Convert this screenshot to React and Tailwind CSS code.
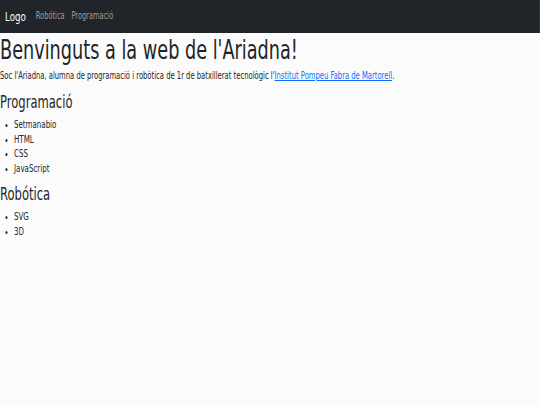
import React from 'react';

const programacio = ['Setmanabio', 'HTML', 'CSS', 'JavaScript'];
const robotica = ['SVG', '3D'];

// The capture is horizontally squeezed, so the page is laid out wider and scaled on x.
function Section({ title, items }) {
  return (
    <section>
      <h2 className="text-[17px] leading-[20px] mb-[5px] text-[#212529]">{title}</h2>
      <ul className="list-disc pl-[20.6px] mb-[9px] text-[10.4px] leading-[14.6px] text-[#212529]">
        {items.map((item) => (
          <li key={item}>{item}</li>
        ))}
      </ul>
    </section>
  );
}

export default function App() {
  return (
    <div className="w-full min-h-[405px] overflow-hidden bg-[#fbfbfb]">
      <div className="w-[794px] origin-top-left scale-x-[0.68] font-['DejaVu_Sans',sans-serif]">
        {/* Navbar */}
        <nav className="h-[33px] bg-[#212529] flex items-center px-[7.4px] gap-[14.5px]">
          <span className="text-white text-[12.8px]">Logo</span>
          <div className="flex gap-[10px] text-[9.8px] text-[#9a9da0]">
            <a>Robótica</a>
            <a>Programació</a>
          </div>
        </nav>

        {/* Content */}
        <main className="pt-[1.5px]">
          <h1 className="text-[26px] leading-[31px] mb-[2px] text-[#212529]">Benvinguts a la web de l'Ariadna!</h1>
          <p className="text-[10px] leading-[15px] mb-[9.5px] text-[#212529]">
            Soc l'Ariadna, alumna de programació i robòtica de 1r de batxillerat tecnològic l'
            <a className="text-[#0d6efd] underline">Institut Pompeu Fabra de Martorell</a>.
          </p>
          <Section title="Programació" items={programacio} />
          <Section title="Robótica" items={robotica} />
        </main>
      </div>
    </div>
  );
}
